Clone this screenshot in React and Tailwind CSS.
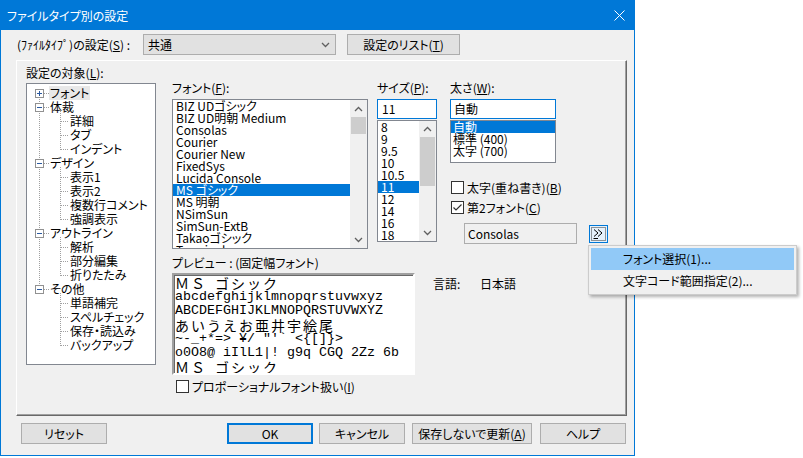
import React from "react";

const Chev = ({ up }) => (
  <svg width="9" height="6" viewBox="0 0 9 6">
    <path
      d={up ? "M1 5 L4.5 1.5 L8 5" : "M1 1 L4.5 4.5 L8 1"}
      fill="none"
      stroke="#606060"
      strokeWidth="1.3"
    />
  </svg>
);

const Check = ({ checked }) => (
  <div className="w-[13px] h-[13px] border border-[#333333] bg-white shrink-0 flex items-center justify-center">
    {checked && (
      <svg width="11" height="11" viewBox="0 0 11 11">
        <path d="M1.5 5.5 L4 8 L9.5 2.5" fill="none" stroke="#333333" strokeWidth="1.2" />
      </svg>
    )}
  </div>
);

const tree = [
  { t: "フォント", r: true, plus: true, sel: true },
  { t: "体裁", r: true },
  { t: "詳細" },
  { t: "タブ" },
  { t: "インデント" },
  { t: "デザイン", r: true },
  { t: "表示1" },
  { t: "表示2" },
  { t: "複数行コメント" },
  { t: "強調表示" },
  { t: "アウトライン", r: true },
  { t: "解析" },
  { t: "部分編集" },
  { t: "折りたたみ" },
  { t: "その他", r: true },
  { t: "単語補完" },
  { t: "スペルチェック" },
  { t: "保存・読込み" },
  { t: "バックアップ" },
];

const groups = [
  [1, 4],
  [5, 9],
  [10, 13],
  [14, 18],
];

function TreeLines() {
  const dot = { stroke: "#a0a0a0", strokeWidth: 1, strokeDasharray: "1 1" };
  const roots = tree.map((n, i) => (n.r ? i : -1)).filter((i) => i >= 0);
  return (
    <svg className="absolute left-0 top-0 pointer-events-none" width="128" height="280">
      <line x1="12.5" y1="9" x2="12.5" y2={14 * 14 + 10} {...dot} />
      {groups.map(([p, last]) => (
        <line key={"v" + p} x1="33.5" y1={14 * p + 13} x2="33.5" y2={14 * last + 10} {...dot} />
      ))}
      {tree.map((n, i) =>
        n.r ? (
          <line key={"h" + i} x1="17" y1={14 * i + 9.5} x2="22" y2={14 * i + 9.5} {...dot} />
        ) : (
          <line key={"h" + i} x1="34" y1={14 * i + 9.5} x2="41" y2={14 * i + 9.5} {...dot} />
        )
      )}
      {roots.map((i) => (
        <g key={"b" + i}>
          <rect x="8.5" y={14 * i + 5.5} width="8" height="8" fill="white" stroke="#919191" />
          <line x1="10" y1={14 * i + 9.5} x2="15" y2={14 * i + 9.5} stroke="#2c5aa0" />
          {tree[i].plus && (
            <line x1="12.5" y1={14 * i + 7} x2="12.5" y2={14 * i + 12} stroke="#2c5aa0" />
          )}
        </g>
      ))}
    </svg>
  );
}

const fonts = [
  "BIZ UDゴシック",
  "BIZ UD明朝 Medium",
  "Consolas",
  "Courier",
  "Courier New",
  "FixedSys",
  "Lucida Console",
  "MS ゴシック",
  "MS 明朝",
  "NSimSun",
  "SimSun-ExtB",
  "Takaoゴシック",
  "Terminal",
];

const sizes = ["8", "9", "9.5", "10", "10.5", "11", "12", "14", "16", "18"];

const Btn = ({ children, className = "" }) => (
  <div
    className={
      "h-[21px] border border-[#adadad] bg-[#e1e1e1] flex items-center justify-center whitespace-nowrap " +
      className
    }
  >
    {children}
  </div>
);

const mono = "h-[14px] leading-[14px] whitespace-nowrap text-[13.33px] [font-family:'Liberation_Mono',monospace]";

export default function App() {
  return (
    <div className="relative w-[803px] h-[458px] bg-white overflow-hidden text-[12px] leading-[14px] text-black [font-family:'Noto_Sans_CJK_JP','Noto_Sans',sans-serif] [font-feature-settings:'palt']">
      <div className="w-[635px] h-[456px] border border-[#0078d7] bg-[#f0f0f0] flex flex-col">
        {/* title bar */}
        <div className="h-[29px] shrink-0 bg-[#0078d7] text-white flex items-center justify-between pl-[6px] pr-[9px]">
          <span>ファイルタイプ別の設定</span>
          <svg width="11" height="11" viewBox="0 0 11 11">
            <path d="M0.5 0.5 L10.5 10.5 M10.5 0.5 L0.5 10.5" stroke="white" strokeWidth="1" />
          </svg>
        </div>

        {/* top row */}
        <div className="mt-[4px] h-[21px] shrink-0 flex items-center pl-[16px]">
          <div className="w-[126px] whitespace-nowrap">
            (ﾌｧｲﾙﾀｲﾌﾟ)の設定(<u>S</u>) :
          </div>
          <div className="w-[193px] h-[21px] border border-[#adadad] bg-[#e1e1e1] flex items-center justify-between pl-[4px] pr-[5px]">
            <span>共通</span>
            <Chev />
          </div>
          <Btn className="ml-[11px] w-[113px]">
            設定のリスト(<u>T</u>)
          </Btn>
        </div>

        {/* panel */}
        <div className="mt-[5px] ml-[15px] w-[611px] h-[356px] shrink-0 border border-t-white border-l-white border-r-[#696969] border-b-[#696969] shadow-[inset_-1px_-1px_0_#a0a0a0] flex">
          {/* left column */}
          <div className="ml-[9px] pt-[5px] flex flex-col">
            <div className="h-[14px] whitespace-nowrap">
              設定の対象(<u>L</u>):
            </div>
            <div className="mt-[3px] w-[130px] h-[282px] border border-[#828790] bg-white relative overflow-hidden">
              <TreeLines />
              <div className="pt-[2px] relative">
                {tree.map((n, i) => (
                  <div
                    key={i}
                    className={
                      "h-[14px] leading-[14px] whitespace-nowrap " + (n.r ? "pl-[22px]" : "pl-[43px]")
                    }
                  >
                    {n.sel ? (
                      <span className="inline-block bg-[#e8e8e8] px-[1px]">{n.t}</span>
                    ) : (
                      <span className={n.r ? "pl-[1px]" : ""}>{n.t}</span>
                    )}
                  </div>
                ))}
              </div>
            </div>
          </div>

          {/* right area */}
          <div className="ml-[16px] pt-[20px] flex flex-col">
            <div className="flex">
              {/* font list */}
              <div className="w-[196px] flex flex-col">
                <div className="h-[14px] whitespace-nowrap">
                  フォント(<u>F</u>):
                </div>
                <div className="mt-[4px] h-[150px] border border-[#828790] bg-white flex overflow-hidden">
                  <div className="flex-1 min-w-0">
                    {fonts.map((f, i) => (
                      <div
                        key={f}
                        className={
                          "h-[12px] leading-[12px] pl-[3px] whitespace-nowrap " +
                          (i === 7 ? "bg-[#0078d7] text-white" : "")
                        }
                      >
                        {f}
                      </div>
                    ))}
                  </div>
                  <div className="w-[17px] h-full bg-[#f0f0f0] flex flex-col">
                    <div className="h-[17px] flex items-center justify-center">
                      <Chev up />
                    </div>
                    <div className="h-[17px] mx-[1px] bg-[#cdcdcd]" />
                    <div className="flex-1" />
                    <div className="h-[17px] flex items-center justify-center">
                      <Chev />
                    </div>
                  </div>
                </div>
              </div>

              {/* size */}
              <div className="ml-[9px] w-[60px] flex flex-col">
                <div className="h-[14px] whitespace-nowrap">
                  サイズ(<u>P</u>):
                </div>
                <div className="mt-[4px] h-[20px] border border-[#0078d7] bg-white pl-[4px] leading-[18px]">
                  11
                </div>
                <div className="mt-[1px] h-[122px] border border-[#828790] bg-white flex overflow-hidden">
                  <div className="flex-1 min-w-0">
                    {sizes.map((s, i) => (
                      <div
                        key={s}
                        className={
                          "h-[12px] leading-[12px] pl-[3px] " + (i === 5 ? "bg-[#0078d7] text-white" : "")
                        }
                      >
                        {s}
                      </div>
                    ))}
                  </div>
                  <div className="w-[17px] h-full bg-[#f0f0f0] flex flex-col">
                    <div className="h-[16px] flex items-center justify-center">
                      <Chev up />
                    </div>
                    <div className="h-[49px] mx-[1px] bg-[#cdcdcd]" />
                    <div className="flex-1" />
                    <div className="h-[16px] flex items-center justify-center">
                      <Chev />
                    </div>
                  </div>
                </div>
              </div>

              {/* weight */}
              <div className="ml-[13px] w-[106px] flex flex-col">
                <div className="h-[14px] whitespace-nowrap">
                  太さ(<u>W</u>):
                </div>
                <div className="mt-[4px] h-[20px] border border-[#0078d7] bg-white pl-[3px] leading-[18px]">
                  自動
                </div>
                <div className="mt-[1px] h-[43px] border border-[#828790] bg-white overflow-hidden">
                  <div className="h-[12px] leading-[12px] pl-[2px] bg-[#0078d7] text-white">自動</div>
                  <div className="h-[12px] leading-[12px] pl-[2px] whitespace-nowrap">標準 (400)</div>
                  <div className="h-[12px] leading-[12px] pl-[2px] whitespace-nowrap">太字 (700)</div>
                </div>
                <div className="mt-[18px] h-[13px] flex items-center ml-[1px] whitespace-nowrap">
                  <Check />
                  <span className="ml-[3px]">
                    太字(重ね書き)(<u>B</u>)
                  </span>
                </div>
                <div className="mt-[7px] h-[13px] flex items-center ml-[1px] whitespace-nowrap">
                  <Check checked />
                  <span className="ml-[3px]">
                    第2フォント(<u>C</u>)
                  </span>
                </div>
                <div className="mt-[9px] ml-[14px] flex items-center">
                  <div className="w-[113px] h-[21px] shrink-0 border border-[#adadad] bg-[#f0f0f0] pl-[3px] flex items-center">
                    Consolas
                  </div>
                  <svg className="ml-[12px] shrink-0" width="19" height="18" viewBox="0 0 19 18">
                    <rect x="0.5" y="0.5" width="18" height="17" fill="#e5f1fb" stroke="#0078d7" />
                    <rect x="2.5" y="2.5" width="14" height="13" fill="none" stroke="#333" strokeDasharray="1 1" />
                    <path d="M5 4.5 L9 8 L5 11.5 M9 4.5 L13 8 L9 11.5" fill="none" stroke="#000" strokeWidth="1" />
                    <line x1="4.5" y1="13.5" x2="9" y2="13.5" stroke="#000" />
                  </svg>
                </div>
              </div>
            </div>

            {/* bottom part */}
            <div className="mt-[7px] flex">
              <div className="w-[243px] flex flex-col">
                <div className="h-[14px] whitespace-nowrap">プレビュー : (固定幅フォント)</div>
                <div className="mt-[3px] h-[102px] border-2 border-t-[#a0a0a0] border-l-[#a0a0a0] border-r-white border-b-white shadow-[inset_1px_1px_0_#696969] bg-white overflow-hidden pl-[1px] pt-[1px]">
                  <div className="h-[14px] leading-[14px] whitespace-nowrap text-[14px] tracking-[2px] [font-feature-settings:normal]">
                    ＭＳ<span className="inline-block w-[8px]"></span>ゴシック
                  </div>
                  <div className={mono}>abcdefghijklmnopqrstuvwxyz</div>
                  <div className={mono}>ABCDEFGHIJKLMNOPQRSTUVWXYZ</div>
                  <div className="h-[14px] leading-[14px] whitespace-nowrap text-[14px] tracking-[2px] [font-feature-settings:normal]">
                    あいうえお亜井宇絵尾
                  </div>
                  <div className={mono}>{"~-_+*=> ¥/ \"'` <{[]}>"}</div>
                  <div className={mono}>o0O8@ iIlL1|! g9q CGQ 2Zz 6b</div>
                  <div className="h-[14px] leading-[14px] whitespace-nowrap text-[14px] tracking-[2px] [font-feature-settings:normal]">
                    ＭＳ<span className="inline-block w-[8px]"></span>ゴシック
                  </div>
                </div>
                <div className="mt-[5px] ml-[4px] h-[13px] flex items-center whitespace-nowrap">
                  <Check />
                  <span className="ml-[3px]">
                    プロポーショナルフォント扱い(<u>I</u>)
                  </span>
                </div>
              </div>
              <div className="ml-[18px] mt-[21px] h-[14px] flex whitespace-nowrap">
                <span className="w-[47px]">言語:</span>
                <span>日本語</span>
              </div>
            </div>
          </div>
        </div>

        {/* bottom buttons */}
        <div className="mt-[7px] h-[21px] shrink-0 flex pl-[20px]">
          <Btn className="w-[86px]">リセット</Btn>
          <div className="ml-[120px] w-[86px] h-[21px] border-2 border-[#0078d7] bg-[#e1e1e1] flex items-center justify-center">
            OK
          </div>
          <Btn className="ml-[6px] w-[86px]">キャンセル</Btn>
          <Btn className="ml-[7px] w-[120px]">
            保存しないで更新(<u>A</u>)
          </Btn>
          <Btn className="ml-[8px] w-[86px]">ヘルプ</Btn>
        </div>
      </div>

      {/* popup menu */}
      <div className="absolute left-[588px] top-[245px] w-[209px] h-[50px] bg-[#f0f0f0] border border-[#cccccc] shadow-[2px_2px_3px_rgba(0,0,0,0.3)] p-[2px]">
        <div className="h-[22px] bg-[#91c9f7] flex items-center pl-[32px] whitespace-nowrap">
          フォント選択(1)...
        </div>
        <div className="h-[22px] flex items-center pl-[32px] whitespace-nowrap">
          文字コード範囲指定(2)...
        </div>
      </div>
    </div>
  );
}
